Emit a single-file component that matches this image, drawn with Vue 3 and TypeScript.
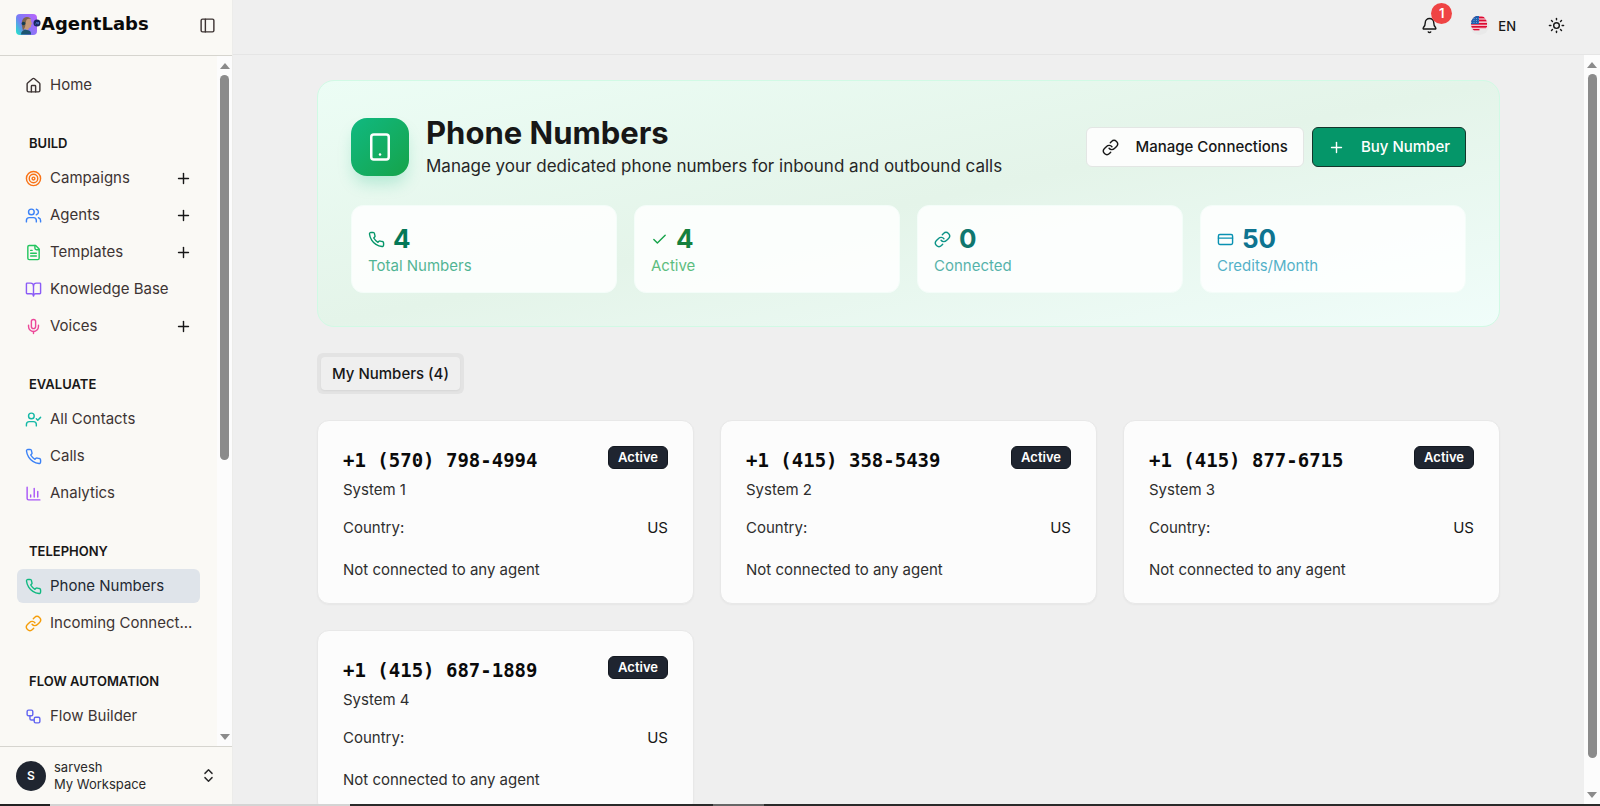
<script setup lang="ts">
import { h } from 'vue'

type Shape = [string, Record<string, string>]

const p = (d: string): Shape => ['path', { d }]
const c = (cx: string, cy: string, r: string): Shape => ['circle', { cx, cy, r }]
const r = (x: string, y: string, width: string, height: string, rx: string): Shape => ['rect', { x, y, width, height, rx }]

const shapes: Record<string, Shape[]> = {
  home: [p('M15 21v-8a1 1 0 0 0-1-1h-4a1 1 0 0 0-1 1v8'), p('M3 10a2 2 0 0 1 .709-1.528l7-5.999a2 2 0 0 1 2.582 0l7 5.999A2 2 0 0 1 21 10v9a2 2 0 0 1-2 2H5a2 2 0 0 1-2-2z')],
  target: [c('12', '12', '10'), c('12', '12', '6'), c('12', '12', '2')],
  users: [p('M16 21v-2a4 4 0 0 0-4-4H6a4 4 0 0 0-4 4v2'), c('9', '7', '4'), p('M22 21v-2a4 4 0 0 0-3-3.87'), p('M16 3.13a4 4 0 0 1 0 7.75')],
  file: [p('M15 2H6a2 2 0 0 0-2 2v16a2 2 0 0 0 2 2h12a2 2 0 0 0 2-2V7z'), p('M14 2v4a2 2 0 0 0 2 2h4'), p('M10 9H8'), p('M16 13H8'), p('M16 17H8')],
  book: [p('M12 7v14'), p('M3 18a1 1 0 0 1-1-1V4a1 1 0 0 1 1-1h5a4 4 0 0 1 4 4 4 4 0 0 1 4-4h5a1 1 0 0 1 1 1v13a1 1 0 0 1-1 1h-6a3 3 0 0 0-3 3 3 3 0 0 0-3-3z')],
  mic: [p('M12 2a3 3 0 0 0-3 3v7a3 3 0 0 0 6 0V5a3 3 0 0 0-3-3Z'), p('M19 10v2a7 7 0 0 1-14 0v-2'), p('M12 19v3')],
  userCheck: [p('m16 11 2 2 4-4'), p('M16 21v-2a4 4 0 0 0-4-4H6a4 4 0 0 0-4 4v2'), c('9', '7', '4')],
  phone: [p('M22 16.92v3a2 2 0 0 1-2.18 2 19.79 19.79 0 0 1-8.63-3.07 19.5 19.5 0 0 1-6-6 19.79 19.79 0 0 1-3.07-8.67A2 2 0 0 1 4.11 2h3a2 2 0 0 1 2 1.72 12.84 12.84 0 0 0 .7 2.81 2 2 0 0 1-.45 2.11L8.09 9.91a16 16 0 0 0 6 6l1.27-1.27a2 2 0 0 1 2.11-.45 12.84 12.84 0 0 0 2.81.7A2 2 0 0 1 22 16.92z')],
  chart: [p('M3 3v16a2 2 0 0 0 2 2h16'), p('M18 17V9'), p('M13 17V5'), p('M8 17v-3')],
  link: [p('M10 13a5 5 0 0 0 7.54.54l3-3a5 5 0 0 0-7.07-7.07l-1.72 1.71'), p('M14 11a5 5 0 0 0-7.54-.54l-3 3a5 5 0 0 0 7.07 7.07l1.71-1.71')],
  flow: [r('3', '3', '8', '8', '2'), p('M7 11v4a2 2 0 0 0 2 2h4'), r('13', '13', '8', '8', '2')],
  plus: [p('M5 12h14'), p('M12 5v14')],
  chevrons: [p('m7 15 5 5 5-5'), p('m7 9 5-5 5 5')],
  panel: [r('3', '3', '18', '18', '2'), p('M9 3v18')],
  bell: [p('M10.268 21a2 2 0 0 0 3.464 0'), p('M3.262 15.326A1 1 0 0 0 4 17h16a1 1 0 0 0 .74-1.673C19.41 13.956 18 12.499 18 8A6 6 0 0 0 6 8c0 4.499-1.411 5.956-2.738 7.326')],
  sun: [c('12', '12', '4'), p('M12 2v2'), p('M12 20v2'), p('m4.93 4.93 1.41 1.41'), p('m17.66 17.66 1.41 1.41'), p('M2 12h2'), p('M20 12h2'), p('m6.34 17.66-1.41 1.41'), p('m19.07 4.93-1.41 1.41')],
  device: [r('5', '2', '14', '20', '2'), p('M12 18h.01')],
  check: [p('M20 6 9 17l-5-5')],
  card: [r('2', '5', '20', '14', '2'), p('M2 10h20')],
}

const Icon = (props: { name: string }) =>
  h(
    'svg',
    { viewBox: '0 0 24 24', fill: 'none', stroke: 'currentColor', 'stroke-width': '2', 'stroke-linecap': 'round', 'stroke-linejoin': 'round', 'aria-hidden': 'true' },
    shapes[props.name].map(([tag, attrs]) => h(tag, attrs)),
  )
Icon.props = ['name']

interface NavItem { label: string; icon: string; tone: string; add?: boolean; active?: boolean }
interface NavGroup { title: string; items: NavItem[] }

const groups: NavGroup[] = [
  { title: '', items: [{ label: 'Home', icon: 'home', tone: 'ink' }] },
  {
    title: 'BUILD',
    items: [
      { label: 'Campaigns', icon: 'target', tone: 'orange', add: true },
      { label: 'Agents', icon: 'users', tone: 'blue', add: true },
      { label: 'Templates', icon: 'file', tone: 'green', add: true },
      { label: 'Knowledge Base', icon: 'book', tone: 'violet' },
      { label: 'Voices', icon: 'mic', tone: 'pink', add: true },
    ],
  },
  {
    title: 'EVALUATE',
    items: [
      { label: 'All Contacts', icon: 'userCheck', tone: 'teal' },
      { label: 'Calls', icon: 'phone', tone: 'blue' },
      { label: 'Analytics', icon: 'chart', tone: 'purple' },
    ],
  },
  {
    title: 'TELEPHONY',
    items: [
      { label: 'Phone Numbers', icon: 'phone', tone: 'emerald', active: true },
      { label: 'Incoming Connect...', icon: 'link', tone: 'amber' },
    ],
  },
  {
    title: 'FLOW AUTOMATION',
    items: [{ label: 'Flow Builder', icon: 'flow', tone: 'indigo' }],
  },
]

const stats = [
  { value: 4, label: 'Total Numbers', icon: 'phone', tone: 's-emerald' },
  { value: 4, label: 'Active', icon: 'check', tone: 's-green' },
  { value: 0, label: 'Connected', icon: 'link', tone: 's-teal' },
  { value: 50, label: 'Credits/Month', icon: 'card', tone: 's-cyan' },
]

const numbers = [
  { phone: '+1 (570) 798-4994', name: 'System 1' },
  { phone: '+1 (415) 358-5439', name: 'System 2' },
  { phone: '+1 (415) 877-6715', name: 'System 3' },
  { phone: '+1 (415) 687-1889', name: 'System 4' },
]
</script>

<template>
  <div class="app">
    <aside class="sidebar">
      <div class="brand">
        <a href="#" class="logo" aria-label="AgentLabs">
          <svg class="mark" viewBox="0 0 25 21" aria-hidden="true">
            <defs>
              <linearGradient id="mk" x1="0" y1="0.8" x2="1" y2="0.2">
                <stop offset="0" stop-color="#2bd9cf" />
                <stop offset="0.35" stop-color="#7a7cf6" />
                <stop offset="1" stop-color="#b366fb" />
              </linearGradient>
            </defs>
            <rect x="0" y="0" width="21" height="21" rx="4" fill="url(#mk)" />
            <path d="M5 20.500c0-3 2-4 4-5l4 1c2 1 2 2 2 4z" fill="#1d5570" />
            <path d="M7 8c0-3 2-5 4-5 3 0 4 2 4 4l1 3-1 1v2l-2 1-1 2-4-1z" fill="#c79a78" />
            <path d="M6 12c-1-5 1-9 5-9 2 0 3 1 4 2-3-1-5 0-5 3l-1 5-2 4z" fill="#7b6450" />
            <circle cx="7.500" cy="9.500" r="1.800" fill="#123c50" />
            <circle cx="21" cy="9" r="3.500" fill="#16275c" />
            <path d="M19.500 10.500 21 8l1 2.500M22.500 8v2" fill="none" stroke="#5b86e0" stroke-width="0.700" />
          </svg>
          <span class="wordmark">AgentLabs</span>
        </a>
        <button class="icon-btn" type="button" aria-label="Toggle sidebar"><Icon name="panel" class="i16" /></button>
      </div>

      <div class="side-body">
        <nav class="nav" aria-label="Main">
          <section v-for="g in groups" :key="g.title" class="group">
            <h2 v-if="g.title" class="group-title">{{ g.title }}</h2>
            <ul class="items">
              <li v-for="i in g.items" :key="i.label" class="item" :class="{ active: i.active }">
                <a href="#" class="item-link">
                  <Icon :name="i.icon" class="i16" :class="i.tone" />
                  <span>{{ i.label }}</span>
                </a>
                <button v-if="i.add" class="icon-btn" type="button" :aria-label="`Add to ${i.label}`"><Icon name="plus" class="i16" /></button>
              </li>
            </ul>
          </section>
        </nav>
        <div class="scrollbar" aria-hidden="true">
          <i class="arrow up"></i>
          <div class="track"><div class="thumb side-thumb"></div></div>
          <i class="arrow down"></i>
        </div>
      </div>

      <button class="account" type="button">
        <span class="avatar">S</span>
        <span class="who"><span>sarvesh</span><span>My Workspace</span></span>
        <Icon name="chevrons" class="i16" />
      </button>
    </aside>

    <div class="main">
      <header class="topbar">
        <button class="icon-btn bell" type="button" aria-label="Notifications, 1 unread">
          <Icon name="bell" class="i16" />
          <span class="count">1</span>
        </button>
        <button class="lang" type="button">
          <svg class="flag" viewBox="0 0 19 19" aria-hidden="true">
            <defs><clipPath id="fl"><path d="M1 8A8 8 0 0 1 17 7V11.500H16V13H9.500V14.500H4C2 13 1 11 1 8z" /></clipPath></defs>
            <circle cx="9.500" cy="9.500" r="9.500" fill="#e9e9e9" />
            <g clip-path="url(#fl)">
              <rect width="19" height="19" fill="#fbfbfb" />
              <path d="M0 1.500h19M0 4.500h19M0 7.800h19M0 10.800h19M0 13.800h19" stroke="#dc0a32" stroke-width="1.900" />
              <rect width="9" height="8" fill="#1f5fae" />
              <path d="M1 2.500h8M1 4.500h8M1 6.500h8" stroke="#8fb4e0" stroke-width="0.700" stroke-dasharray="1 1.500" />
            </g>
          </svg>
          <span>EN</span>
        </button>
        <button class="icon-btn" type="button" aria-label="Toggle theme"><Icon name="sun" class="i16" /></button>
      </header>

      <div class="body">
        <main class="page">
          <div class="content">
            <section class="hero">
              <div class="hero-head">
                <div class="hero-icon"><Icon name="device" class="i30" /></div>
                <div class="hero-text">
                  <h1>Phone Numbers</h1>
                  <p>Manage your dedicated phone numbers for inbound and outbound calls</p>
                </div>
                <div class="actions">
                  <button class="btn" type="button"><Icon name="link" class="i16" />Manage Connections</button>
                  <button class="btn primary" type="button"><Icon name="plus" class="i16" />Buy Number</button>
                </div>
              </div>
              <div class="stats">
                <div v-for="s in stats" :key="s.label" class="stat" :class="s.tone">
                  <div class="stat-top"><Icon :name="s.icon" class="i16" /><strong>{{ s.value }}</strong></div>
                  <div class="stat-label">{{ s.label }}</div>
                </div>
              </div>
            </section>

            <div class="tabs" role="tablist">
              <button class="tab" type="button" role="tab" aria-selected="true">My Numbers (4)</button>
            </div>

            <div class="grid">
              <article v-for="n in numbers" :key="n.phone" class="card">
                <div class="card-head">
                  <h3>{{ n.phone }}</h3>
                  <span class="badge">Active</span>
                </div>
                <p class="sub">{{ n.name }}</p>
                <div class="row"><span>Country:</span><span class="val">US</span></div>
                <p class="note">Not connected to any agent</p>
              </article>
            </div>
          </div>
        </main>
        <div class="scrollbar wide" aria-hidden="true">
          <i class="arrow up"></i>
          <div class="track"><div class="thumb page-thumb"></div></div>
          <i class="arrow down"></i>
        </div>
      </div>
    </div>
    <div class="edge" aria-hidden="true"></div>
  </div>
</template>

<style>
body {
  margin: 0;
}
</style>

<style scoped>
* {
  box-sizing: border-box;
}
.app {
  display: grid;
  grid-template-columns: 233px minmax(0, 1fr);
  grid-template-rows: minmax(0, 1fr) 2px;
  height: 100vh;
  overflow: hidden;
  background: #efefef;
  color: #171717;
  font: 400 15px/22px Inter, "Liberation Sans", sans-serif;
}
h1, h2, h3, p, ul {
  margin: 0;
  padding: 0;
}
ul {
  list-style: none;
}
a {
  color: inherit;
  text-decoration: none;
}
button {
  font: inherit;
  color: inherit;
  cursor: pointer;
}
.i16 {
  width: 17px;
  height: 17px;
  flex: none;
}
.i30 {
  width: 30px;
  height: 30px;
}
.icon-btn {
  display: flex;
  padding: 0;
  border: 0;
  background: none;
}
.edge {
  grid-column: 1 / -1;
  background: linear-gradient(90deg, #222 50px, #d4d4d4 50px, #d4d4d4 350px, #2a2a2a 350px, #2a2a2a 713px, #666 713px, #666 764px, #2a2a2a 764px);
}

.sidebar {
  display: flex;
  flex-direction: column;
  min-height: 0;
  background: #faf9f5;
  border-right: 1px solid #ececea;
}
.brand {
  display: flex;
  align-items: center;
  justify-content: space-between;
  height: 56px;
  padding: 0 16px 4px;
  border-bottom: 1px solid #d6d5cf;
  color: #3d3433;
}
.logo {
  display: flex;
  align-items: center;
  padding-bottom: 2px;
}
.mark {
  width: 25px;
  height: 21px;
}
.wordmark {
  font: 700 18px/22px "DejaVu Sans", sans-serif;
  color: #0a0a0a;
  padding-bottom: 2px;
}
.side-body {
  display: flex;
  flex: 1;
  min-height: 0;
}
.nav {
  flex: 1;
  min-width: 0;
  overflow: hidden;
  padding: 12px 17px 0;
}
.group {
  padding-bottom: 33px;
}
.group-title {
  padding-left: 12px;
  font-size: 13px;
  font-weight: 600;
  line-height: 17px;
  margin-bottom: 9px;
}
.items {
  display: flex;
  flex-direction: column;
  gap: 3px;
}
.item {
  display: flex;
  align-items: center;
  height: 34px;
  padding: 0 8px;
  border-radius: 6px;
  color: #3d3433;
}
.item.active {
  background: #dfe4ea;
  color: #1f2933;
}
.item-link {
  display: flex;
  align-items: center;
  gap: 8px;
  flex: 1;
  min-width: 0;
  white-space: nowrap;
}
.item .icon-btn {
  color: #171717;
}
.ink { color: #3d3433; }
.orange { color: #f97316; }
.blue { color: #3b82f6; }
.green { color: #22c55e; }
.violet { color: #8b5cf6; }
.pink { color: #ec4899; }
.teal { color: #14b8a6; }
.purple { color: #a855f7; }
.emerald { color: #10b981; }
.amber { color: #f59e0b; }
.indigo { color: #6366f1; }

.scrollbar {
  display: flex;
  flex-direction: column;
  align-items: center;
  width: 15px;
  padding: 7px 0 6px;
  background: #fcfcfc;
}
.scrollbar.wide {
  width: 16px;
}
.arrow {
  border: 5px solid transparent;
}
.arrow.up {
  border-top: 0;
  border-bottom: 6px solid #8b8b8b;
}
.arrow.down {
  border-bottom: 0;
  border-top: 6px solid #8b8b8b;
}
.track {
  flex: 1;
  width: 9px;
  padding: 6px 0;
}
.thumb {
  border-radius: 5px;
  background: #8b8b8b;
}
.side-thumb {
  height: 59%;
}
.page-thumb {
  height: 96%;
}

.account {
  display: flex;
  align-items: center;
  gap: 8px;
  height: 58px;
  padding: 0 15px 0 16px;
  border: 0;
  border-top: 1px solid #d6d5cf;
  background: none;
  text-align: left;
  color: #2a2a2a;
}
.avatar {
  display: grid;
  place-items: center;
  width: 30px;
  height: 30px;
  border-radius: 50%;
  background: #1f2530;
  color: #fff;
  font-size: 12px;
  font-weight: 600;
}
.who {
  display: flex;
  flex-direction: column;
  flex: 1;
  font-size: 13px;
  line-height: 17px;
}

.main {
  display: flex;
  flex-direction: column;
  min-height: 0;
}
.topbar {
  display: flex;
  align-items: center;
  justify-content: flex-end;
  gap: 32px;
  height: 55px;
  padding: 0 35px 3px;
  border-bottom: 1px solid #e5e5e5;
}
.bell {
  position: relative;
}
.count {
  position: absolute;
  left: 10px;
  bottom: 10px;
  width: 21px;
  height: 21px;
  border-radius: 50%;
  background: #ef4444;
  color: #fff;
  font-size: 13px;
  font-weight: 600;
  line-height: 21px;
  text-align: center;
}
.lang {
  display: flex;
  align-items: center;
  gap: 9px;
  padding: 0;
  border: 0;
  background: none;
  font-size: 13px;
  font-weight: 500;
}
.flag {
  width: 19px;
  height: 19px;
}
.body {
  display: flex;
  flex: 1;
  min-height: 0;
}
.page {
  flex: 1;
  min-width: 0;
  overflow: hidden;
  padding: 25px 25px 0;
}
.content {
  max-width: 1183px;
  margin: 0 auto;
}
.hero {
  padding: 33px;
  border: 1px solid #d1fae5;
  border-radius: 17px;
  background: linear-gradient(to bottom right, #ecfdf5, #e4f4e9 50%, #f0fdfa);
}
.hero-head {
  display: flex;
  align-items: center;
  gap: 17px;
}
.hero-icon {
  display: grid;
  place-items: center;
  width: 58px;
  height: 58px;
  border-radius: 16px;
  background: linear-gradient(135deg, #10b981, #16a34a);
  color: #fff;
  box-shadow: 0 10px 16px -3px rgba(16, 185, 129, 0.25);
}
.hero-text {
  flex: 1;
}
h1 {
  font-size: 31px;
  font-weight: 700;
  line-height: 38px;
}
.hero-text p {
  font-size: 17px;
  line-height: 28px;
  color: #262626;
}
.actions {
  display: flex;
  gap: 8px;
}
.btn {
  display: flex;
  align-items: center;
  gap: 16px;
  height: 40px;
  padding: 0 15px;
  border: 1px solid #e3e6e4;
  border-radius: 6px;
  background: #fcfdfc;
  font-weight: 500;
  white-space: nowrap;
}
.btn.primary {
  border-color: #14352b;
  background: #059669;
  color: #fff;
}
.stats {
  display: grid;
  grid-template-columns: repeat(4, minmax(0, 1fr));
  gap: 17px;
  margin-top: 25px;
}
.stat {
  padding: 16px;
  border: 1px solid #f4fdf9;
  border-radius: 12px;
  background: rgba(255, 255, 255, 0.85);
}
.stat-top {
  display: flex;
  align-items: center;
  gap: 8px;
}
.stat-top strong {
  font-size: 26px;
  line-height: 34px;
}
.stat-label {
  line-height: 20px;
  opacity: 0.7;
}
.s-emerald { color: #059669; }
.s-green { color: #16a34a; }
.s-teal { color: #0d9488; }
.s-cyan { color: #0891b2; }
.s-emerald strong { color: #047857; }
.s-green strong { color: #15803d; }
.s-teal strong { color: #0f766e; }
.s-cyan strong { color: #0e7490; }

.tabs {
  display: flex;
  width: fit-content;
  margin-top: 26px;
  padding: 4px;
  border-radius: 6px;
  background: #e3e3e3;
}
.tab {
  height: 33px;
  padding: 0 11px;
  border: 0;
  border-radius: 4px;
  background: #efefef;
  font-weight: 500;
  box-shadow: 0 1px 2px rgba(0, 0, 0, 0.06);
}
.grid {
  display: grid;
  grid-template-columns: repeat(3, minmax(0, 1fr));
  gap: 26px;
  margin-top: 26px;
}
.card {
  padding: 25px 25px 22px;
  border: 1px solid #e8e8e8;
  border-radius: 12px;
  background: #fcfcfc;
  box-shadow: 0 1px 2px rgba(0, 0, 0, 0.04);
}
.card-head {
  display: flex;
  align-items: flex-start;
  justify-content: space-between;
}
h3 {
  font: 700 19px/28px "DejaVu Sans Mono", monospace;
  color: #0a0a0a;
}
.badge {
  height: 23px;
  padding: 0 9px;
  border: 1px solid #131820;
  border-radius: 6px;
  background: #1f2530;
  color: #fff;
  font-size: 13px;
  font-weight: 600;
  line-height: 21px;
}
.sub {
  margin-top: 5px;
  color: #2e2e2e;
}
.row {
  display: flex;
  justify-content: space-between;
  margin-top: 16px;
  color: #2e2e2e;
}
.val {
  color: #171717;
}
.note {
  margin-top: 20px;
  color: #2e2e2e;
}
</style>
